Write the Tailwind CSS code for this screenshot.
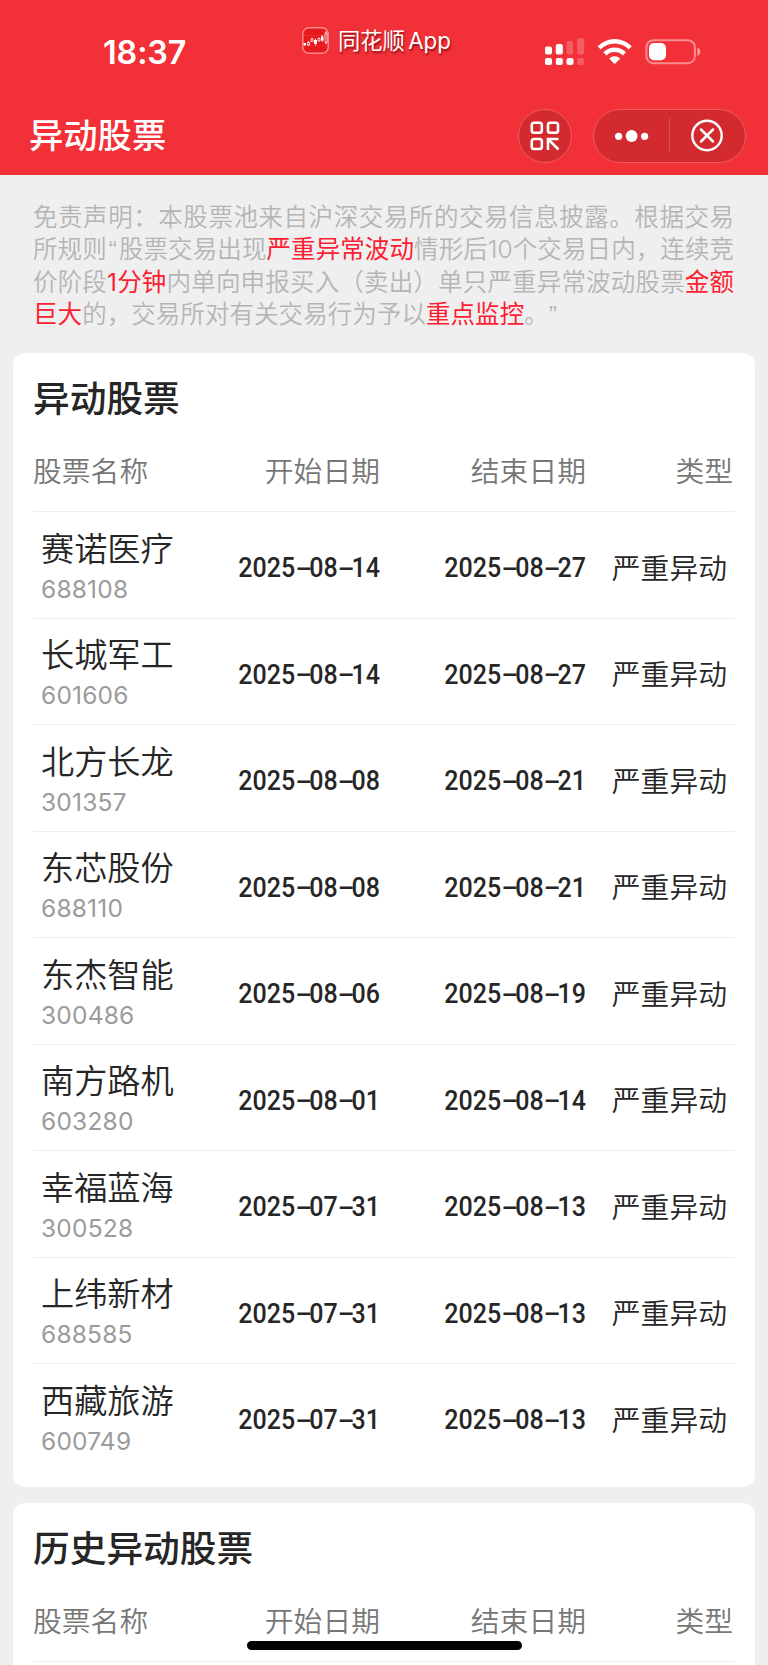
<!DOCTYPE html>
<html lang="zh-CN">
<head>
<meta charset="utf-8">
<title>异动股票</title>
<script src="https://cdn.jsdelivr.net/npm/@tailwindcss/browser@4"></script>
</head>
<body class="relative h-[1665px] w-[768px] overflow-hidden bg-[#efefef] font-['Inter','Noto_Sans_CJK_SC',sans-serif] text-[#262626]">
<header class="h-[175px] bg-[#f23037] text-white">
  <div class="flex h-[97px] items-start">
    <div class="ml-[103px] mt-[33px] w-[84px] text-[32.3px] leading-[40px] font-semibold tracking-[-0.1px] whitespace-nowrap">18:37</div>
    <div class="mt-[27px] ml-[115px] flex w-[150px] items-center">
      <svg class="size-[27px] shrink-0" viewBox="0 0 27 27" fill="none">
        <rect x="0.8" y="0.8" width="25.4" height="25.4" rx="6" fill="#e6191f" stroke="#fa8a8d" stroke-width="1.4"/>
        <path d="M2 8.500h23M2 19h23" stroke="#ee4045" stroke-width=".5"/>
        <path d="M1.500 16h2.500v2.500H1.500zM12 13h3v4h-3zM19 9.500h2.500v4H19z" fill="#fff"/>
        <path d="M5.500 15.500h2v2.500h-2zM6.500 14v1.500M6.500 18v1M9 12h2v2.500H9zM10 10.500v1.500M13.500 11.500v7M16 11.500h2v2.500h-2zM17 10.500v1M20.200 8v7M23 6h2v9.500h-2zM24 4v2M24 15.500v2" stroke="#fff" stroke-width=".8"/>
      </svg>
      <span class="ml-[9px] text-[22.3px] leading-[27px] whitespace-nowrap [word-spacing:-3px] [text-shadow:1px_2px_2px_rgb(90_0_0/0.65)]">同花顺 App</span>
    </div>
    <svg class="mt-[37px] ml-[93px] h-[30px] w-[158px]" viewBox="0 0 158 30" fill="#fff">
      <rect y="9.500" width="7" height="8" rx="2"/><rect x="10.800" y="7" width="7" height="10.500" rx="2"/>
      <rect x="21.500" y="4" width="6.700" height="13.500" rx="2" opacity=".22"/><rect x="32.200" y="1" width="7" height="16.500" rx="2" opacity=".22"/>
      <rect y="21" width="7" height="7" rx="2"/><rect x="10.800" y="21" width="7" height="7" rx="2"/><rect x="21.500" y="21" width="7" height="7" rx="2"/><rect x="32.200" y="21" width="7" height="7" rx="2" opacity=".22"/>
      <path d="M52.600 9.200a24 24 0 0 1 34.200 0l-3.100 3.200a19.600 19.600 0 0 0-28 0z"/>
      <path d="M58.300 15.300a16 16 0 0 1 22.800 0l-3.200 3.200a11.500 11.500 0 0 0-16.400 0z"/>
      <path d="M64.200 21.600a7.800 7.800 0 0 1 11 0l-4.500 4.700q-1 .9-2 0z"/>
      <rect x="101.400" y="3.200" width="48.500" height="23" rx="7" fill="none" stroke="#fff" stroke-opacity=".45" stroke-width="2"/>
      <rect x="104" y="6" width="17" height="17.300" rx="5"/>
      <path d="M152.300 10.500q3 1.300 3 4.200t-3 4.200z" opacity=".5"/>
    </svg>
  </div>
  <div class="flex h-[78px] items-start">
    <h1 class="mt-[15px] ml-[29px] w-[160px] text-[34.3px] leading-[48px] font-medium whitespace-nowrap">异动股票</h1>
    <div class="mt-[12px] ml-[329px] flex size-[54px] items-center justify-center rounded-full border border-[#f25a60] bg-[#d32a2f]">
      <svg class="size-[30px]" viewBox="0 0 30 30" fill="none" stroke="#fff" stroke-width="2.600">
        <rect x="1.800" y="1.800" width="10" height="10" rx="2.200"/><rect x="18" y="1.800" width="10" height="10" rx="2.200"/><rect x="1.800" y="18" width="10" height="10" rx="2.200"/>
        <path d="M18 29v-11h10.500M18.500 18.500l10 10"/>
      </svg>
    </div>
    <div class="mt-[12px] ml-[21px] flex h-[54px] w-[153px] items-center rounded-full border border-[#f25a60] bg-[#d32a2f]">
      <svg class="h-[54px] w-[151px]" viewBox="0 0 151 54" fill="#fff">
        <circle cx="24.600" cy="27.300" r="3.600"/><circle cx="37.600" cy="27" r="5.900"/><circle cx="50.600" cy="27.300" r="3.600"/>
        <path d="M75.500 9.500v33" stroke="#dc5054" stroke-width="1.300"/>
        <g fill="none" stroke="#fff" stroke-width="2.400"><circle cx="113" cy="26.500" r="14.700"/><path d="m107 20.500 12 12m0-12-12 12" stroke-width="2.500" stroke-linecap="round"/></g>
      </svg>
    </div>
  </div>
</header>

<section class="mt-[26px] h-[152px] pl-[33px] text-[24.5px] leading-[32px] font-[350] text-[#b5b5b5] whitespace-nowrap [&_b]:font-normal [&_b]:text-[#fc1e33] [&_q]:inline-block [&_q]:w-[12px] [&_q]:font-['Liberation_Sans'] [&_q]:before:content-none [&_q]:after:content-none">
  <p class="w-[701px] text-justify [text-align-last:justify]">免责声明：本股票池来自沪深交易所的交易信息披露。根据交易</p>
  <p class="w-[701px] text-justify [text-align-last:justify]">所规则<q class="indent-[2px]">“</q>股票交易出现<b>严重异常波动</b>情形后10个交易日内，连续竞</p>
  <p class="w-[701px] text-justify [text-align-last:justify]">价阶段<b>1分钟</b>内单向申报买入（卖出）单只严重异常波动股票<b>金额</b></p>
  <p class="tracking-[0.06px]"><b>巨大</b>的，交易所对有关交易行为予以<b>重点监控</b>。<q>”</q></p>
</section>

<main class="flex flex-col gap-4 px-[13px]">
  <section class="h-[1134px] rounded-xl bg-white px-5">
    <h2 class="pt-[21px] text-[36.7px] leading-[50px] font-medium">异动股票</h2>
    <div class="mt-[24px] grid h-[64px] grid-cols-[140px_207px_206px_149px] border-b border-[#ededed] text-[28.8px] leading-[48px] font-[350] text-[#777]"><span>股票名称</span><span class="text-right">开始日期</span><span class="text-right">结束日期</span><span class="pr-[2px] text-right">类型</span></div>
    <div id="rows"></div>
  </section>
  <section class="h-[162px] rounded-t-xl bg-white px-5">
    <h2 class="pt-[21px] text-[36.7px] leading-[50px] font-medium">历史异动股票</h2>
    <div class="mt-[24px] grid h-[64px] grid-cols-[140px_207px_206px_149px] border-b border-[#ededed] text-[28.8px] leading-[48px] font-[350] text-[#777]"><span>股票名称</span><span class="text-right">开始日期</span><span class="text-right">结束日期</span><span class="pr-[2px] text-right">类型</span></div>
  </section>
</main>
<div class="absolute top-[1641px] left-[247px] h-[9px] w-[275px] rounded-full bg-black"></div>

<script>
const stocks = [
  ['赛诺医疗', '688108', '2025-08-14', '2025-08-27'],
  ['长城军工', '601606', '2025-08-14', '2025-08-27'],
  ['北方长龙', '301357', '2025-08-08', '2025-08-21'],
  ['东芯股份', '688110', '2025-08-08', '2025-08-21'],
  ['东杰智能', '300486', '2025-08-06', '2025-08-19'],
  ['南方路机', '603280', '2025-08-01', '2025-08-14'],
  ['幸福蓝海', '300528', '2025-07-31', '2025-08-13'],
  ['上纬新材', '688585', '2025-07-31', '2025-08-13'],
  ['西藏旅游', '600749', '2025-07-31', '2025-08-13']
];
const date = d => `<span class="mt-[36px] origin-right scale-x-[0.92] justify-self-end font-['Roboto'] text-[27.2px] leading-[40px] font-medium whitespace-nowrap">${
  d.replaceAll('-', `<i class="relative -top-[0.5px] mx-[3.8px] inline-block w-[7.6px] scale-x-[2] text-center not-italic">-</i>`)}</span>`;
document.getElementById('rows').innerHTML = stocks.map(([name, code, start, end]) => `
  <div class="grid h-[106.5px] grid-cols-[140px_207px_206px_149px] border-b border-[#ededed] last:border-b-0">
    <div class="pt-[12.5px] pl-2">
      <div class="text-[33.2px] leading-[48px] font-[350] whitespace-nowrap">${name}</div>
      <div class="text-[24.5px] leading-[32px] font-normal tracking-[0.2px] text-[#9b9b9b]">${code}</div>
    </div>
    ${date(start)}${date(end)}
    <span class="mt-[32.5px] pr-[8px] text-right text-[28.8px] leading-[48px] font-[350] whitespace-nowrap">严重异动</span>
  </div>`).join('');
</script>
</body>
</html>
